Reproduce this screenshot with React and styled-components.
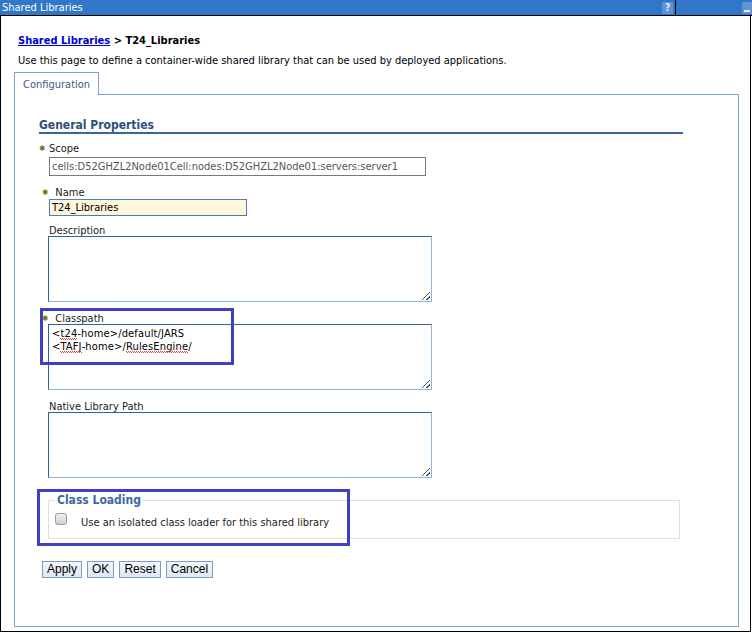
import React from 'react';
import styled, { createGlobalStyle } from 'styled-components';

const GlobalStyle = createGlobalStyle`
  html, body {
    margin: 0;
    padding: 0;
    background: #ffffff;
  }
  body {
    font-family: "DejaVu Sans Condensed", "DejaVu Sans", sans-serif;
    font-stretch: condensed;
    font-size: 11px;
    color: #000000;
  }
  * {
    box-sizing: border-box;
  }
`;

const Window = styled.div`
  width: 752px;
  height: 633px;
  display: flex;
  flex-direction: column;
`;

const TitleBar = styled.div`
  height: 16px;
  background-color: #3177c8;
  border-bottom: 1px solid #000000;
  display: flex;
  align-items: stretch;
  color: #ffffff;
`;

const Title = styled.div`
  flex: 1;
  padding-left: 2px;
  font-size: 11px;
  line-height: 15px;
`;

const HelpBtn = styled.div`
  width: 11px;
  height: 12px;
  margin: 2px 2px 0 0;
  background-color: #5d95d6;
  color: #e8f0fb;
  font-size: 10px;
  font-weight: bold;
  line-height: 12px;
  text-align: center;
`;

const Divider = styled.div`
  width: 1px;
  background-color: #000000;
`;

const Spacer = styled.div`
  width: 66px;
`;

const MinBtn = styled.div`
  width: 10px;
  height: 12px;
  margin-top: 2px;
  background-color: #5d95d6;
  position: relative;

  &::after {
    content: '';
    position: absolute;
    left: 2px;
    right: 2px;
    bottom: 2px;
    height: 2px;
    background: #e8f0fb;
  }
`;

const Body = styled.div`
  width: 751px;
  height: 616px;
  border: 1px solid #000000;
  border-top: none;
  padding: 18px 0 0 13px;
`;

const Crumbs = styled.div`
  margin-left: 4px;
  font-weight: bold;
  font-size: 11px;
  line-height: 14px;

  a {
    color: #0000cc;
    text-decoration: underline;
  }
`;

const Intro = styled.div`
  margin: 6px 0 0 4px;
  line-height: 14px;
`;

const Tab = styled.div`
  position: relative;
  z-index: 1;
  margin-top: 4px;
  width: 85px;
  height: 23px;
  margin-bottom: -1px;
  background: #ffffff;
  border: 1px solid #7ea1dc;
  border-bottom: none;
  padding: 5px 0 0 8px;
  color: #3b5a82;
  line-height: 14px;
`;

const Panel = styled.div`
  position: relative;
  width: 725px;
  height: 533px;
  border: 1px solid #7ea1dc;
  padding: 23px 0 0 24px;
`;

const Heading = styled.div`
  width: 644px;
  height: 16px;
  font-size: 12px;
  font-weight: bold;
  color: #2e4f7a;
  line-height: 15px;
  border-bottom: 2px solid #3b6694;
`;

const Field = styled.div`
  margin-top: ${(p) => p.$top}px;
  padding-left: 10px;
`;

const Label = styled.div`
  position: relative;
  height: 12px;
  line-height: 12px;
  color: #222222;
`;

const Req = styled.span`
  position: absolute;
  left: ${(p) => p.$left}px;
  top: 0;
  color: #7a6a00;
  font-family: "DejaVu Sans", sans-serif;
  font-size: 8px;
`;

const TextInput = styled.div`
  margin-top: ${(p) => p.$gap}px;
  width: ${(p) => p.$w}px;
  height: ${(p) => p.$h}px;
  border: 1px solid ${(p) => (p.$readonly ? '#7a7a7a' : '#4a7fb5')};
  background-color: ${(p) => (p.$readonly ? '#ffffff' : '#fff6dc')};
  color: ${(p) => (p.$readonly ? '#555555' : '#000000')};
  padding: 0 0 0 2px;
  font-size: 11px;
  line-height: ${(p) => p.$h - 2}px;
  white-space: nowrap;
`;

const TextBox = styled.div`
  position: relative;
  margin: -1px 0 0 -1px;
  width: 384px;
  height: 66px;
  border-style: solid;
  border-width: 1px;
  border-color: #2f6699 #8fb3d9 #8fb3d9 #2f6699;
  padding: 2px 3px;
  font-size: 11px;
  line-height: 13px;
  color: #000000;

  &::after {
    content: '';
    position: absolute;
    right: 1px;
    bottom: 1px;
    width: 8px;
    height: 8px;
    background:
      linear-gradient(135deg, transparent 45%, #555 45%, #555 55%, transparent 55%) 0 0 / 8px 8px,
      linear-gradient(135deg, transparent 72%, #555 72%, #555 82%, transparent 82%) 0 0 / 8px 8px;
  }
`;

const Line = styled.div`
  height: 13px;
  letter-spacing: 0.15px;
`;

/* spell-check squiggle under a word */
const Typo = styled.span`
  position: relative;
  display: inline-block;
  line-height: 13px;

  &::after {
    content: '';
    position: absolute;
    left: 0;
    right: 0;
    bottom: 0;
    height: 2px;
    background:
      linear-gradient(90deg, #e84040 50%, transparent 50%) 0 0 / 2px 1px repeat-x,
      linear-gradient(90deg, transparent 50%, #e84040 50%) 0 1px / 2px 1px repeat-x;
  }
`;

const Highlight = styled.div`
  position: absolute;
  left: ${(p) => p.$x}px;
  top: ${(p) => p.$y}px;
  width: ${(p) => p.$w}px;
  height: ${(p) => p.$h}px;
  border: 3px solid #3f3fc4;
  pointer-events: none;
`;

const Group = styled.fieldset`
  margin: 14px 0 0 9px;
  width: 632px;
  height: 47px;
  border: 1px solid #e0e0e0;
  padding: 0 6px 0 6px;
`;

const Legend = styled.legend`
  padding: 0 2px;
  font-size: 12px;
  font-weight: bold;
  color: #3b6a9e;
  line-height: 16px;
`;

const CheckRow = styled.label`
  display: flex;
  align-items: flex-start;
  gap: 14px;
  margin-top: 5px;
  color: #222222;
`;

const Check = styled.input`
  appearance: none;
  margin: 0;
  width: 12px;
  height: 12px;
  border: 1px solid #9a9a9a;
  border-radius: 3px;
  background: linear-gradient(#f0f0f0, #cfcfcf);
`;

const CheckText = styled.span`
  padding-top: 4px;
  line-height: 12px;
`;

const Buttons = styled.div`
  display: flex;
  gap: 5px;
  margin: 22px 0 0 3px;
`;

const Button = styled.button`
  height: 17px;
  padding: 0 4px;
  border: 1px solid #7f9bc4;
  background: linear-gradient(#f4f7fc, #dfe8f5);
  font-family: "Liberation Sans", Arial, sans-serif;
  font-size: 12px;
  line-height: 15px;
  color: #000000;
`;

export default function App() {
  return (
    <>
      <GlobalStyle />
      <Window>
        <TitleBar>
          <Title>Shared Libraries</Title>
          <HelpBtn>?</HelpBtn>
          <Divider />
          <Spacer />
          <MinBtn />
        </TitleBar>
        <Body>
          <Crumbs>
            <a href="#libs">Shared Libraries</a> &gt; T24_Libraries
          </Crumbs>
          <Intro>
            Use this page to define a container-wide shared library that can be used by deployed applications.
          </Intro>
          <Tab>Configuration</Tab>
          <Panel>
            <Heading>General Properties</Heading>

            <Field $top={9}>
              <Label>
                <Req $left={-10}>✱</Req>Scope
              </Label>
              <TextInput $readonly $gap={2} $w={377} $h={19}>
                cells:D52GHZL2Node01Cell:nodes:D52GHZL2Node01:servers:server1
              </TextInput>
            </Field>

            <Field $top={11}>
              <Label>
                <Req $left={-7}>✱</Req>&nbsp;&nbsp;Name
              </Label>
              <TextInput $gap={0} $w={198} $h={17}>
                T24_Libraries
              </TextInput>
            </Field>

            <Field $top={9}>
              <Label>Description</Label>
              <TextBox />
            </Field>

            <Field $top={11}>
              <Label>
                <Req $left={-7}>✱</Req>&nbsp;&nbsp;Classpath
              </Label>
              <TextBox>
                <Line>
                  &lt;<Typo>t24</Typo>-home&gt;/default/JARS
                </Line>
                <Line>
                  &lt;<Typo>TAFJ</Typo>-home&gt;/<Typo>RulesEngine</Typo>/
                </Line>
              </TextBox>
            </Field>

            <Field $top={11}>
              <Label>Native Library Path</Label>
              <TextBox />
            </Field>

            <Group>
              <Legend>Class Loading</Legend>
              <CheckRow>
                <Check type="checkbox" />
                <CheckText>Use an isolated class loader for this shared library</CheckText>
              </CheckRow>
            </Group>

            <Buttons>
              <Button>Apply</Button>
              <Button>OK</Button>
              <Button>Reset</Button>
              <Button>Cancel</Button>
            </Buttons>

            <Highlight $x={25} $y={213} $w={194} $h={57} />
            <Highlight $x={22} $y={394} $w={313} $h={57} />
          </Panel>
        </Body>
      </Window>
    </>
  );
}
